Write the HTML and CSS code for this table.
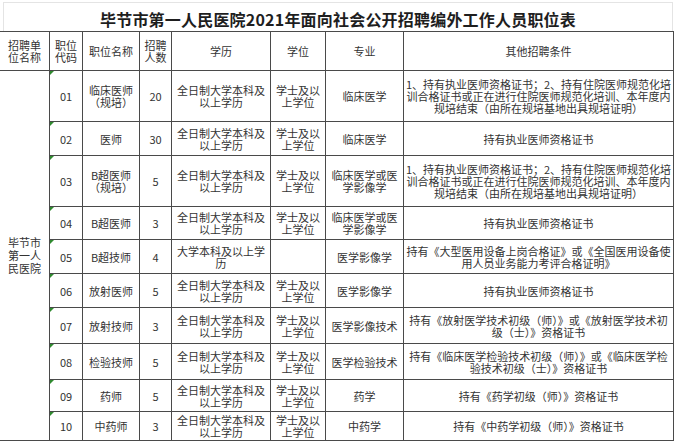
FILE: index.html
```html
<!DOCTYPE html>
<html lang="zh-CN">
<head>
<meta charset="utf-8">
<title>毕节市第一人民医院2021年面向社会公开招聘编外工作人员职位表</title>
<link rel="stylesheet" href="styles.css">
</head>
<body>
<div class="sheet">
  <div class="title">毕节市第一人民医院2021年面向社会公开招聘编外工作人员职位表</div>
  <table class="grid">
    <colgroup>
      <col class="c-unit"><col class="c-code"><col class="c-name"><col class="c-num"><col class="c-edu"><col class="c-deg"><col class="c-major"><col class="c-cond">
    </colgroup>
    <thead>
      <tr class="h-head">
        <th><span class="ln">招聘单</span><span class="ln">位名称</span></th>
        <th><span class="ln">职位</span><span class="ln">代码</span></th>
        <th>职位名称</th>
        <th><span class="ln">招聘</span><span class="ln">人数</span></th>
        <th>学历</th>
        <th>学位</th>
        <th>专业</th>
        <th>其他招聘条件</th>
      </tr>
    </thead>
    <tbody>
      <tr class="h51">
        <td rowspan="10" class="unit"><span class="ln">毕节市</span><span class="ln">第一人</span><span class="ln">民医院</span></td>
        <td class="code">01</td>
        <td><span class="ln">临床医师</span><span class="ln">（规培）</span></td>
        <td>20</td>
        <td><span class="ln">全日制大学本科及</span><span class="ln">以上学历</span></td>
        <td><span class="ln">学士及以</span><span class="ln">上学位</span></td>
        <td>临床医学</td>
        <td><span class="ln">1、持有执业医师资格证书；2、持有住院医师规范化培</span><span class="ln">训合格证书或正在进行住院医师规范化培训、本年度内</span><span class="ln">规培结束（由所在规培基地出具规培证明）</span></td>
      </tr>
      <tr class="h34">
        <td class="code">02</td>
        <td>医师</td>
        <td>30</td>
        <td><span class="ln">全日制大学本科及</span><span class="ln">以上学历</span></td>
        <td><span class="ln">学士及以</span><span class="ln">上学位</span></td>
        <td>临床医学</td>
        <td>持有执业医师资格证书</td>
      </tr>
      <tr class="h51">
        <td class="code">03</td>
        <td><span class="ln">B超医师</span><span class="ln">（规培）</span></td>
        <td>5</td>
        <td><span class="ln">全日制大学本科及</span><span class="ln">以上学历</span></td>
        <td><span class="ln">学士及以</span><span class="ln">上学位</span></td>
        <td><span class="ln">临床医学或医</span><span class="ln">学影像学</span></td>
        <td><span class="ln">1、持有执业医师资格证书；2、持有住院医师规范化培</span><span class="ln">训合格证书或正在进行住院医师规范化培训、本年度内</span><span class="ln">规培结束（由所在规培基地出具规培证明）</span></td>
      </tr>
      <tr class="h33">
        <td class="code">04</td>
        <td>B超医师</td>
        <td>3</td>
        <td><span class="ln">全日制大学本科及</span><span class="ln">以上学历</span></td>
        <td><span class="ln">学士及以</span><span class="ln">上学位</span></td>
        <td><span class="ln">临床医学或医</span><span class="ln">学影像学</span></td>
        <td>持有执业医师资格证书</td>
      </tr>
      <tr class="h34">
        <td class="code">05</td>
        <td>B超技师</td>
        <td>4</td>
        <td><span class="ln">大学本科及以上学</span><span class="ln">历</span></td>
        <td></td>
        <td>医学影像学</td>
        <td><span class="ln">持有《大型医用设备上岗合格证》或《全国医用设备使</span><span class="ln">用人员业务能力考评合格证明》</span></td>
      </tr>
      <tr class="h34">
        <td class="code">06</td>
        <td>放射医师</td>
        <td>5</td>
        <td><span class="ln">全日制大学本科及</span><span class="ln">以上学历</span></td>
        <td><span class="ln">学士及以</span><span class="ln">上学位</span></td>
        <td>医学影像学</td>
        <td>持有执业医师资格证书</td>
      </tr>
      <tr class="h36">
        <td class="code">07</td>
        <td>放射技师</td>
        <td>3</td>
        <td><span class="ln">全日制大学本科及</span><span class="ln">以上学历</span></td>
        <td><span class="ln">学士及以</span><span class="ln">上学位</span></td>
        <td>医学影像技术</td>
        <td><span class="ln">持有《放射医学技术初级（师）》或《放射医学技术初</span><span class="ln">级（士）》资格证书</span></td>
      </tr>
      <tr class="h36">
        <td class="code">08</td>
        <td>检验技师</td>
        <td>5</td>
        <td><span class="ln">全日制大学本科及</span><span class="ln">以上学历</span></td>
        <td><span class="ln">学士及以</span><span class="ln">上学位</span></td>
        <td>医学检验技术</td>
        <td><span class="ln">持有《临床医学检验技术初级（师）》或《临床医学检</span><span class="ln">验技术初级（士）》资格证书</span></td>
      </tr>
      <tr class="h32">
        <td class="code">09</td>
        <td>药师</td>
        <td>5</td>
        <td><span class="ln">全日制大学本科及</span><span class="ln">以上学历</span></td>
        <td><span class="ln">学士及以</span><span class="ln">上学位</span></td>
        <td>药学</td>
        <td>持有《药学初级（师）》资格证书</td>
      </tr>
      <tr class="h29">
        <td class="code">10</td>
        <td>中药师</td>
        <td>3</td>
        <td><span class="ln">全日制大学本科及</span><span class="ln">以上学历</span></td>
        <td><span class="ln">学士及以</span><span class="ln">上学位</span></td>
        <td>中药学</td>
        <td>持有《中药学初级（师）》资格证书</td>
      </tr>
    </tbody>
  </table>
</div>
</body>
</html>
```

FILE: styles.css
```css
html, body {
  margin: 0;
  padding: 0;
  background: #ffffff;
}

body {
  font-family: "Noto Sans CJK SC", "Noto Sans", sans-serif;
  color: #333333;
  width: 677px;
  height: 444px;
  overflow: hidden;
}

.sheet {
  padding-top: 2px;
}

.title {
  box-sizing: border-box;
  margin-left: 3px;
  width: 670px;
  height: 29px;
  border-top: 1px solid #e4e4e4;
  border-left: 1px solid #e4e4e4;
  border-right: 1px solid #e4e4e4;
  font-family: "Noto Sans CJK SC", sans-serif;
  font-weight: 700;
  font-size: 16px;
  line-height: 20px;
  padding-top: 6px;
  text-align: center;
  color: #1e1e1e;
  letter-spacing: 0.2px;
}

.grid {
  margin-left: -1px;
  border-collapse: collapse;
  table-layout: fixed;
  width: 674px;
  font-size: 11px;
  line-height: 12px;
}

.grid th,
.grid td {
  border: 1px solid #4a4a4a;
  padding: 0;
  text-align: center;
  vertical-align: middle;
  font-weight: 400;
  font-size: 11px;
  white-space: nowrap;
  overflow: hidden;
}

.ln {
  display: block;
  height: 12px;
  line-height: 12px;
}

.c-unit { width: 50px; }
.c-code { width: 33px; }
.c-name { width: 57px; }
.c-num { width: 32px; }
.c-edu { width: 99px; }
.c-deg { width: 55px; }
.c-major { width: 78px; }
.c-cond { width: 270px; }

.h-head { height: 39px; }
.h51 { height: 51px; }
.h34 { height: 34px; }
.h33 { height: 33px; }
.h36 { height: 36px; }
.h32 { height: 32px; }
.h29 { height: 29px; }

.unit .ln {
  height: 13px;
  line-height: 13px;
}

.code {
  position: relative;
}

.code::before {
  content: "";
  position: absolute;
  left: 0;
  top: 0;
  width: 0;
  height: 0;
  border-top: 4px solid #2f8a2f;
  border-right: 4px solid transparent;
}
```
